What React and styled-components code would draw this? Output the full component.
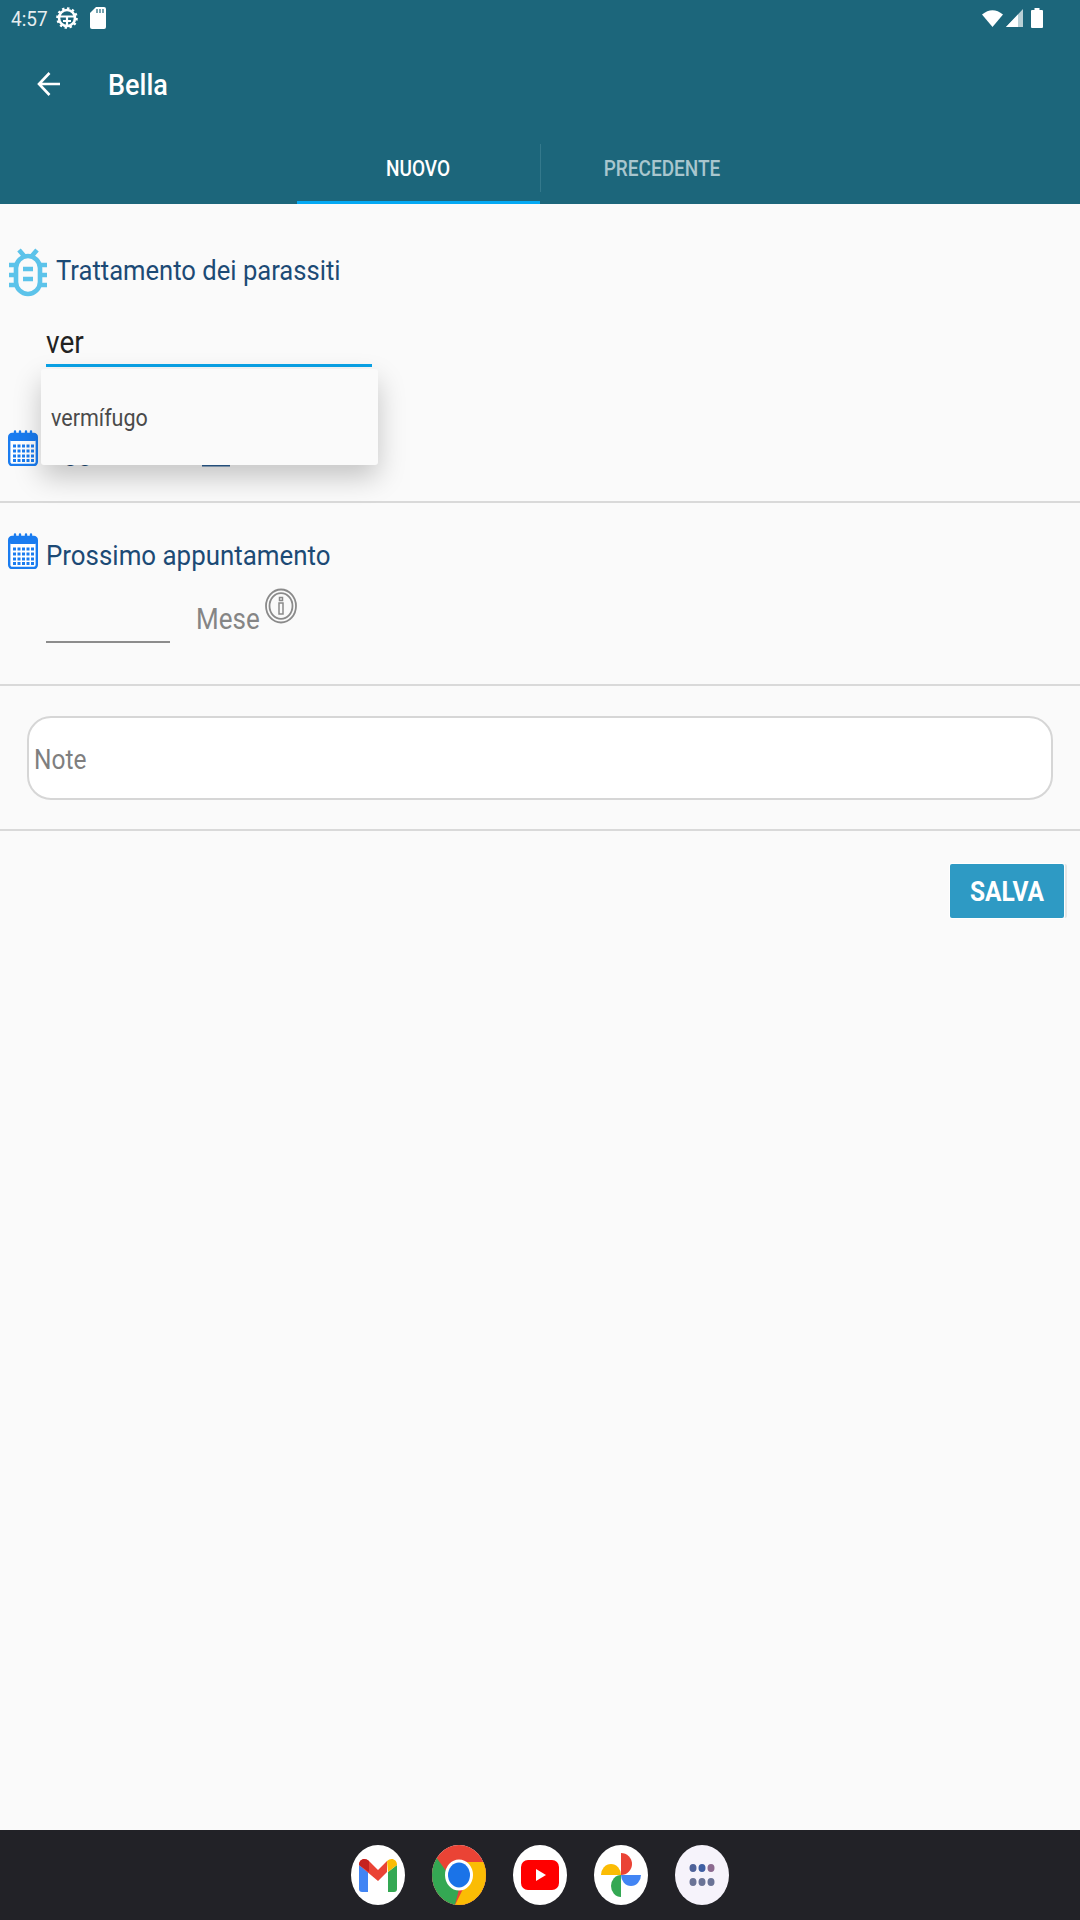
import React from "react";
import styled, { createGlobalStyle } from "styled-components";

const Global = createGlobalStyle`
  html, body {
    margin: 0;
    padding: 0;
    background: #fafafa;
    font-family: Roboto, "Liberation Sans", sans-serif;
  }
`;

const Page = styled.div`
  width: 1080px;
  height: 1920px;
  display: flex;
  flex-direction: column;
  background: #fafafa;
  overflow: hidden;
`;

const Header = styled.header`
  height: 204px;
  flex-shrink: 0;
  display: flex;
  flex-direction: column;
  background: #1c667b;
  color: #fff;
`;

const StatusBar = styled.div`
  height: 36px;
  padding: 0 37px 0 11px;
  display: flex;
  align-items: center;
  justify-content: space-between;
`;

const StatusGroup = styled.div`
  display: flex;
  align-items: center;
  gap: ${(p) => p.$gap || 0}px;
`;

const Clock = styled.span`
  font-size: 19px;
  color: #e6eef0;
  display: inline-block;
  transform: scaleY(1.1);
`;

const SdSlot = styled.span`
  display: flex;
  margin-left: 4px;
`;

const BatterySlot = styled.span`
  display: flex;
  margin-left: 5px;
`;

const Toolbar = styled.div`
  height: 96px;
  padding-left: 37px;
  display: flex;
  align-items: center;
  gap: 47px;
`;

const Title = styled.h1`
  margin: 0;
  padding-top: 2px;
  font-size: 27px;
  font-weight: 500;
  display: inline-block;
  transform: scaleY(1.12);
`;

const Tabs = styled.div`
  flex: 1;
  display: flex;
  justify-content: center;
`;

const Tab = styled.div`
  width: 243px;
  box-sizing: border-box;
  display: flex;
  align-items: center;
  justify-content: center;
  font-size: 19px;
  font-weight: 500;
  padding-top: 3px;
  color: ${(p) => (p.$active ? "#ffffff" : "#a9c6ce")};
  border-bottom: 3px solid ${(p) => (p.$active ? "#03a9f4" : "transparent")};

  span {
    display: inline-block;
    transform: scaleY(1.12);
  }
`;

const TabDivider = styled.div`
  width: 1px;
  height: 48px;
  margin-top: 12px;
  background: #34798c;
`;

const Content = styled.main`
  flex: 1;
  display: flex;
  flex-direction: column;
`;

const Section = styled.section`
  height: ${(p) => p.$height}px;
  box-sizing: border-box;
  padding: ${(p) => p.$padding || "0"};
  border-bottom: 2px solid #d9d9d9;
  position: relative;
`;

const HeadingRow = styled.div`
  display: flex;
  align-items: center;
  gap: ${(p) => p.$gap}px;
  padding-left: 8px;
`;

const Heading = styled.span`
  font-size: ${(p) => p.$size || 25.6}px;
  margin-top: ${(p) => p.$lift || 0}px;
  color: #1c4a75;
  display: inline-block;
  transform: scaleY(1.1);
`;

const SearchValue = styled.div`
  width: 326px;
  height: 48px;
  margin: 22px 0 0 46px;
  box-sizing: border-box;
  border-bottom: 3px solid #0aa3e8;
  font-size: 28px;
  line-height: 48px;
  color: #222;

  span {
    display: inline-block;
    transform: scaleY(1.1);
  }
`;

const DateRow = styled(HeadingRow)`
  margin-top: 63px;
`;

const DateText = styled(Heading)`
  display: flex;
  align-items: flex-end;
`;

const DateChip = styled.i`
  display: block;
  width: 28px;
  height: 20px;
  margin-left: 98px;
  border-bottom: 3px solid #2c5f94;
  box-sizing: border-box;
`;

const Dropdown = styled.div`
  position: absolute;
  left: 41px;
  top: 165px;
  width: 337px;
  height: 96px;
  padding-left: 10px;
  box-sizing: border-box;
  display: flex;
  align-items: center;
  background: #fafafa;
  border-radius: 3px;
  box-shadow: 0 12px 28px rgba(0, 0, 0, 0.22);
  font-size: 21.5px;
  color: #4a4a4a;

  span {
    display: inline-block;
    transform: scaleY(1.1);
  }
`;

const MonthsRow = styled.div`
  display: flex;
  align-items: flex-start;
  margin: 16px 0 0 46px;
`;

const MonthsInput = styled.div`
  width: 124px;
  height: 57px;
  box-sizing: border-box;
  border-bottom: 2px solid #8c8c8c;
`;

const Unit = styled.span`
  margin: 18px 5px 0 26px;
  font-size: 26px;
  color: #858585;
  display: inline-block;
  transform: scaleY(1.1);
`;

const InfoSlot = styled.span`
  display: flex;
  margin-top: 2px;
`;

const NoteBox = styled.div`
  height: 84px;
  box-sizing: border-box;
  padding: 3px 0 0 5px;
  display: flex;
  align-items: center;
  background: #fff;
  border: 2px solid #d6d6d6;
  border-radius: 24px;
  font-size: 24.5px;
  color: #7f7f7f;

  span {
    display: inline-block;
    transform: scaleY(1.1);
  }
`;

const Actions = styled.div`
  display: flex;
  justify-content: flex-end;
  padding: 33px 16px 0 0;
`;

const SaveButton = styled.button`
  width: 114px;
  height: 54px;
  padding: 0;
  border: 0;
  border-radius: 2px;
  background: #2e9ac4;
  box-shadow: 0 0 0 1px #ffffff, 3px 0 0 #e6e6e6;
  color: #fff;
  font-family: inherit;
  font-size: 24.5px;
  font-weight: 700;

  span {
    display: inline-block;
    transform: scaleY(1.1);
  }
`;

const Dock = styled.footer`
  height: 90px;
  flex-shrink: 0;
  display: flex;
  align-items: center;
  justify-content: center;
  gap: 27px;
  background: #222227;
`;

const DockIcon = styled.div`
  width: 54px;
  height: 60px;
  border-radius: 50%;
  overflow: hidden;
  background: ${(p) => p.$bg || "#fff"};
  display: flex;
  align-items: center;
  justify-content: center;

  svg {
    display: block;
  }
`;

const GearIcon = () => (
  <svg width="22" height="24" viewBox="0 0 22 24">
    <circle cx="11" cy="12" r="8" fill="none" stroke="#fff" strokeWidth="2.6" />
    <circle cx="11" cy="12" r="9.6" fill="none" stroke="#fff" strokeWidth="2.4" strokeDasharray="2.4 2.6" />
    <path d="M3 10.5h16M11 11v8M7 15h8" stroke="#fff" strokeWidth="2.2" fill="none" />
  </svg>
);

const SdIcon = () => (
  <svg width="16" height="22" viewBox="0 0 16 22">
    <path d="M6 0h8a2 2 0 0 1 2 2v18a2 2 0 0 1-2 2H2a2 2 0 0 1-2-2V6z" fill="#fff" />
    <path d="M7 2v4M10 2v4M13 2v4" stroke="#1c667b" strokeWidth="1.2" />
  </svg>
);

const WifiIcon = () => (
  <svg width="21" height="18" viewBox="0 0 21 18">
    <path d="M0 5.5Q10.5-3 21 5.5L10.5 18z" fill="#fff" />
  </svg>
);

const SignalIcon = () => (
  <svg width="17" height="18" viewBox="0 0 17 18">
    <path d="M0 18 17 0v18z" fill="#b9d0d6" />
    <path d="M0 18 12 5.500V18z" fill="#fff" />
  </svg>
);

const BatteryIcon = () => (
  <svg width="12" height="20" viewBox="0 0 12 20">
    <path d="M3.500 0h5v2H11a1 1 0 0 1 1 1v16a1 1 0 0 1-1 1H1a1 1 0 0 1-1-1V3a1 1 0 0 1 1-1h2.500z" fill="#fff" />
  </svg>
);

const BackArrow = () => (
  <svg width="24" height="26" viewBox="0 0 24 26">
    <path d="M23 13H3M12.500 2 2 13l10.500 11" fill="none" stroke="#fff" strokeWidth="2.600" />
  </svg>
);

const BugIcon = () => (
  <svg width="40" height="49" viewBox="0 0 40 49">
    <g fill="none" stroke="#5cc3ea" strokeWidth="4.600">
      <rect x="8" y="8" width="24" height="38" rx="12" />
      <path d="M11 2l6 7M29 2l-6 7M1 17h8M1 27h8M1 37h8M31 17h8M31 27h8M31 37h8" />
      <path d="M15 21h10M15 31h10" />
    </g>
  </svg>
);

const CalendarIcon = () => (
  <svg width="30" height="36" viewBox="0 0 30 36">
    <rect x="1.200" y="4" width="27.600" height="31" rx="3" fill="#fff" stroke="#1a7cf0" strokeWidth="2.400" />
    <rect x="1.200" y="4" width="27.600" height="7" rx="2" fill="#1a7cf0" />
    <path d="M7 5V1.500M12 5V1.500M18 5V1.500M23 5V1.500" stroke="#1a7cf0" strokeWidth="2.400" strokeLinecap="round" />
    <g fill="#1a7cf0">
      {[14.5, 19.5, 24.5, 29].map((y) =>
        [5, 9.5, 14, 18.5, 23].map((x) => (
          <rect key={`${x}-${y}`} x={x} y={y} width="3" height="3" />
        ))
      )}
    </g>
  </svg>
);

const InfoIcon = () => (
  <svg width="32" height="36" viewBox="0 0 32 36">
    <g fill="none" stroke="#8a8a8a">
      <ellipse cx="16" cy="18" rx="15" ry="16.500" strokeWidth="1.800" />
      <ellipse cx="16" cy="18" rx="11.500" ry="12.800" strokeWidth="1.800" />
      <rect x="14" y="15" width="4" height="11" strokeWidth="1.500" />
      <rect x="14.500" y="9.500" width="3" height="3" strokeWidth="1.500" />
    </g>
  </svg>
);

const GmailIcon = () => (
  <svg width="38" height="34" viewBox="0 0 38 34">
    <path d="M0 7v24a3 3 0 0 0 3 3h6V14z" fill="#4285f4" />
    <path d="M29 14v20h6a3 3 0 0 0 3-3V7z" fill="#34a853" />
    <path d="M0 7c0-6 6-8 10-4l9 9 9-9v11L19 23 0 7z" fill="#ea4335" />
    <path d="M0 7c0-6 6-8 10-4v11z" fill="#c5221f" />
    <path d="M28 3c4-4 10-2 10 4l-9 7z" fill="#fbbc04" />
  </svg>
);

const ChromeIcon = () => (
  <svg width="54" height="60" viewBox="0 0 54 60" preserveAspectRatio="none">
    <rect width="54" height="60" fill="#ea4335" />
    <path d="M0 60V12h4l23 32-4 16z" fill="#34a853" />
    <path d="M27 17h27v43H23l8-16z" fill="#fbbc04" />
    <ellipse cx="27" cy="30" rx="14" ry="15.500" fill="#fff" />
    <ellipse cx="27" cy="30" rx="11" ry="12.500" fill="#1a73e8" />
  </svg>
);

const YoutubeIcon = () => (
  <svg width="38" height="30" viewBox="0 0 38 30">
    <rect width="38" height="30" rx="7" fill="#ff0000" />
    <path d="M15 9v12l10-6z" fill="#fff" />
  </svg>
);

const PhotosIcon = () => (
  <svg width="40" height="44" viewBox="0 0 40 44">
    <path d="M20 0a11 11 0 0 1 0 22z" fill="#ea4335" />
    <path d="M40 22a10 11 0 0 1-20 0z" fill="#4285f4" />
    <path d="M20 44a10 11 0 0 1 0-22z" fill="#34a853" />
    <path d="M0 22a10 11 0 0 1 20 0z" fill="#fbbc04" />
  </svg>
);

const AppsIcon = () => (
  <svg width="26" height="24" viewBox="0 0 26 24">
    <g fill="#6a7396">
      <ellipse cx="4" cy="5" rx="3.500" ry="4" fill="#4e6299" />
      <ellipse cx="13" cy="5" rx="3.500" ry="4" fill="#3f5fa3" />
      <ellipse cx="22" cy="5" rx="3.500" ry="4" fill="#8c6a90" />
      <ellipse cx="4" cy="19" rx="3.500" ry="4" />
      <ellipse cx="13" cy="19" rx="3.500" ry="4" />
      <ellipse cx="22" cy="19" rx="3.500" ry="4" />
    </g>
  </svg>
);

const App = () => {
  return (
    <Page>
      <Global />
      <Header>
        <StatusBar>
          <StatusGroup $gap={8}>
            <Clock>4:57</Clock>
            <GearIcon />
            <SdSlot>
              <SdIcon />
            </SdSlot>
          </StatusGroup>
          <StatusGroup $gap={3}>
            <WifiIcon />
            <SignalIcon />
            <BatterySlot>
              <BatteryIcon />
            </BatterySlot>
          </StatusGroup>
        </StatusBar>
        <Toolbar>
          <BackArrow />
          <Title>Bella</Title>
        </Toolbar>
        <Tabs>
          <Tab $active>
            <span>NUOVO</span>
          </Tab>
          <TabDivider />
          <Tab>
            <span>PRECEDENTE</span>
          </Tab>
        </Tabs>
      </Header>
      <Content>
        <Section $height={299} $padding="44px 0 0">
          <HeadingRow $gap={8}>
            <BugIcon />
            <Heading $lift={-6}>Trattamento dei parassiti</Heading>
          </HeadingRow>
          <SearchValue>
            <span>ver</span>
          </SearchValue>
          <DateRow $gap={8}>
            <CalendarIcon />
            <DateText $lift={3}>
              Oggi,
              <DateChip />
            </DateText>
          </DateRow>
          <Dropdown>
            <span>vermífugo</span>
          </Dropdown>
        </Section>
        <Section $height={183} $padding="29px 0 0">
          <HeadingRow $gap={8}>
            <CalendarIcon />
            <Heading $size={25.9} $lift={8}>
              Prossimo appuntamento
            </Heading>
          </HeadingRow>
          <MonthsRow>
            <MonthsInput />
            <Unit>Mese</Unit>
            <InfoSlot>
              <InfoIcon />
            </InfoSlot>
          </MonthsRow>
        </Section>
        <Section $height={145} $padding="30px 27px 0 27px">
          <NoteBox>
            <span>Note</span>
          </NoteBox>
        </Section>
        <Actions>
          <SaveButton>
            <span>SALVA</span>
          </SaveButton>
        </Actions>
      </Content>
      <Dock>
        <DockIcon>
          <GmailIcon />
        </DockIcon>
        <DockIcon>
          <ChromeIcon />
        </DockIcon>
        <DockIcon>
          <YoutubeIcon />
        </DockIcon>
        <DockIcon>
          <PhotosIcon />
        </DockIcon>
        <DockIcon $bg="#f6f3fb">
          <AppsIcon />
        </DockIcon>
      </Dock>
    </Page>
  );
};

export default App;
